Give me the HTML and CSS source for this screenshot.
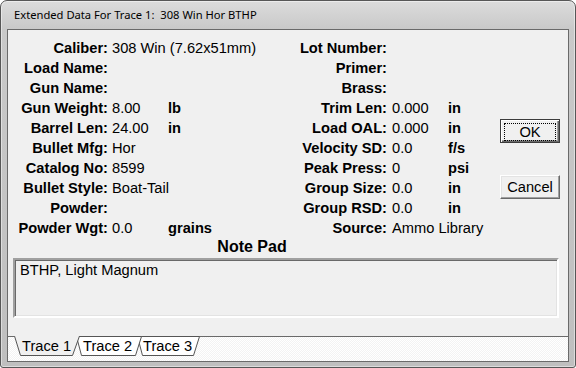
FILE: index.html
```html
<!DOCTYPE html>
<html lang="en">
<head>
    <meta charset="UTF-8">
    <title>Extended Data For Trace 1</title>
    <link rel="stylesheet" href="styles.css">
</head>
<body>

<div class="window">
    <div class="titlebar">Extended Data For Trace 1:&nbsp; 308 Win Hor BTHP</div>
    <div class="client">
        <div class="top">
            <div class="fields">
                <div class="grid">
                    <div class="lbl">Caliber:</div><div class="val wide">308 Win (7.62x51mm)</div><div class="lbl">Lot Number:</div><div class="val2"></div><div class="unit"></div>

                    <div class="lbl">Load Name:</div><div class="val"></div><div class="unit"></div><div class="lbl">Primer:</div><div class="val2"></div><div class="unit"></div>

                    <div class="lbl">Gun Name:</div><div class="val"></div><div class="unit"></div><div class="lbl">Brass:</div><div class="val2"></div><div class="unit"></div>

                    <div class="lbl">Gun Weight:</div><div class="val">8.00</div><div class="unit">lb</div><div class="lbl">Trim Len:</div><div class="val2">0.000</div><div class="unit">in</div>

                    <div class="lbl">Barrel Len:</div><div class="val">24.00</div><div class="unit">in</div><div class="lbl">Load OAL:</div><div class="val2">0.000</div><div class="unit">in</div>

                    <div class="lbl">Bullet Mfg:</div><div class="val">Hor</div><div class="unit"></div><div class="lbl">Velocity SD:</div><div class="val2">0.0</div><div class="unit">f/s</div>

                    <div class="lbl">Catalog No:</div><div class="val">8599</div><div class="unit"></div><div class="lbl">Peak Press:</div><div class="val2">0</div><div class="unit">psi</div>

                    <div class="lbl">Bullet Style:</div><div class="val">Boat-Tail</div><div class="unit"></div><div class="lbl">Group Size:</div><div class="val2">0.0</div><div class="unit">in</div>

                    <div class="lbl">Powder:</div><div class="val"></div><div class="unit"></div><div class="lbl">Group RSD:</div><div class="val2">0.0</div><div class="unit">in</div>

                    <div class="lbl">Powder Wgt:</div><div class="val">0.0</div><div class="unit">grains</div><div class="lbl">Source:</div><div class="val2 wide">Ammo Library</div>
                </div>
                <div class="notepad-title">Note Pad</div>
            </div>
            <div class="buttons">
                <button class="btn default"><span class="focus">OK</span></button>
                <button class="btn cancel">Cancel</button>
            </div>
        </div>

        <div class="notepad">BTHP, Light Magnum</div>

        <div class="tabs">
            <svg width="560" height="25" viewBox="0 0 560 25">
                <line x1="0" y1="0.5" x2="6" y2="0.5" stroke="#6a6a6a"/>
                <line x1="71" y1="0.5" x2="560" y2="0.5" stroke="#6a6a6a"/>
                <polygon points="129.5,0.5 134.5,19.5 185.5,19.5 191.5,0.5" fill="#fff" stroke="#555"/>
                <polygon points="68.5,0.5 73.5,19.5 127.5,19.5 133.5,0.5" fill="#fff" stroke="#555"/>
                <polygon points="6.5,0 12.5,19.5 64.5,19.5 71.5,0" fill="#f0f0f0"/>
                <polyline points="6.5,0 12.5,19.5 64.5,19.5 71.5,0" fill="none" stroke="#555"/>
                <text x="14" y="15" class="tab-text">Trace 1</text>
                <text x="75" y="15" class="tab-text">Trace 2</text>
                <text x="135" y="15" class="tab-text">Trace 3</text>
            </svg>
        </div>
    </div>
</div>

</body>
</html>
```

FILE: styles.css
```css
body {
    margin: 0;
    font-family: "Liberation Sans", Arial, sans-serif;
    color: #000;
}
.window {
    width: 576px;
    height: 368px;
    box-sizing: border-box;
    border: 1px solid #575757;
    border-radius: 7px 7px 3px 3px;
    background: linear-gradient(#dcdcdc, #c9c9c9 28px, #bfbfbf);
    box-shadow: inset 0 0 0 1px rgba(255, 255, 255, 0.45);
    padding: 0 6px 5px 6px;
    display: flex;
    flex-direction: column;
}
.titlebar {
    height: 28px;
    line-height: 27px;
    padding-left: 7px;
    font-family: "Noto Sans", sans-serif;
    font-size: 11.2px;
    white-space: pre;
}
.client {
    flex: 1;
    border: 1px solid #6a6a6a;
    background: #f0f0f0;
    padding-top: 8px;
    display: flex;
    flex-direction: column;
}
.top {
    display: flex;
}
.fields {
    width: 488px;
}
.grid {
    display: grid;
    grid-template-columns: 100px 60px 92px 127px 61px 48px;
    grid-auto-rows: 20px;
    font-size: 14.67px;
    line-height: 20px;
    white-space: nowrap;
}
.lbl {
    font-weight: bold;
    text-align: right;
}
.val {
    padding-left: 4px;
}
.val2 {
    padding-left: 5px;
}
.wide {
    grid-column: span 2;
}
.unit {
    font-weight: bold;
}
.notepad-title {
    margin-top: 1px;
    font-size: 16px;
    line-height: 16px;
    font-weight: bold;
    text-align: center;
}
.buttons {
    margin-left: 4px;
    margin-top: 81px;
    display: flex;
    flex-direction: column;
}
.btn {
    width: 60px;
    height: 24px;
    padding: 0;
    font-family: "Liberation Sans", Arial, sans-serif;
    font-size: 14.67px;
    color: #000;
    background: #f0f0f0;
    border: 1px solid;
    border-color: #fff #696969 #696969 #fff;
    box-shadow: inset -1px -1px 0 #a0a0a0, inset 1px 1px 0 #e3e3e3;
}
.btn.default {
    border: 1px solid #3c3c3c;
    box-shadow: inset 1px 1px 0 #fff, inset -1px -1px 0 #696969, inset -2px -2px 0 #a0a0a0;
    padding: 3px;
}
.focus {
    display: block;
    height: 16px;
    line-height: 16px;
    border: 1px dotted #000;
}
.btn.cancel {
    margin-top: 32px;
}
.notepad {
    margin: 3px 0 0 5px;
    width: 546px;
    height: 60px;
    box-sizing: border-box;
    border: 2px solid;
    border-color: #a0a0a0 #fff #fff #a0a0a0;
    box-shadow: inset 1px 1px 0 #696969, inset -1px -1px 0 #e3e3e3;
    padding: 2px 5px;
    font-size: 14.67px;
    line-height: 17px;
}
.tabs {
    margin-top: 18px;
    height: 25px;
    background: repeating-conic-gradient(#f3f3f3 0 25%, #fff 0 50%) 0 0 / 2px 2px;
}
.tabs svg {
    display: block;
}
.tab-text {
    font-family: "Liberation Sans", Arial, sans-serif;
    font-size: 14.67px;
    fill: #000;
}
```
